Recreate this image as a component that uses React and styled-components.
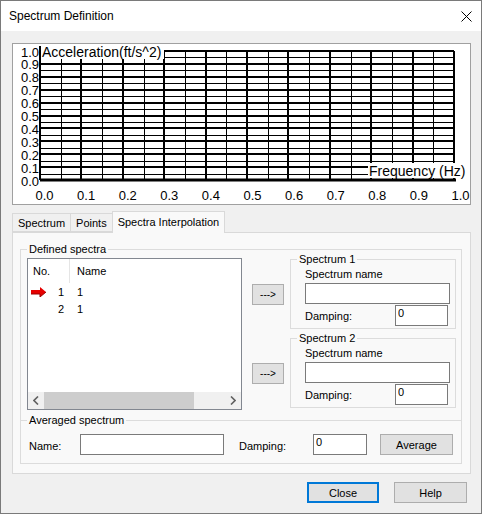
import React from 'react';
import styled, { createGlobalStyle } from 'styled-components';

const GlobalStyle = createGlobalStyle`
  body {
    margin: 0;
    background: #ffffff;
    font-family: "Liberation Sans", Arial, sans-serif;
    font-size: 11px;
    color: #000;
  }
`;

const Window = styled('div')`
  width: 482px;
  height: 514px;
  box-sizing: border-box;
  border: 1px solid #7a7a7a;
  background: #f0f0f0;
  display: flex;
  flex-direction: column;
`;

const TitleBar = styled('div')`
  height: 30px;
  background: #ffffff;
  display: flex;
  align-items: center;
  justify-content: space-between;
  padding: 0 9px 0 8px;
  font-size: 12px;
`;

const Body = styled('div')`
  display: flex;
  flex-direction: column;
  padding: 12px 10px 0 11px;
`;

const ChartPanel = styled('div')`
  width: 459px;
  height: 162px;
  box-sizing: border-box;
  border: 1px solid #a0a0a0;
  background: #ffffff;
  svg { display: block; }
`;

const TabStrip = styled('div')`
  display: flex;
  align-items: flex-end;
  height: 21px;
  margin-top: 6px;
`;

const Tab = styled('div')`
  position: relative;
  box-sizing: border-box;
  height: ${p => (p.$active ? '22px' : '19px')};
  margin-bottom: ${p => (p.$active ? '-1px' : '0')};
  margin-left: ${p => (p.$first ? '0' : '-1px')};
  z-index: ${p => (p.$active ? 1 : 0)};
  padding: ${p => (p.$active ? '0 5px 2px' : '0 5px')};
  display: flex;
  align-items: center;
  border: 1px solid #d9d9d9;
  border-bottom: ${p => (p.$active ? 'none' : '1px solid #d9d9d9')};
  background: ${p => (p.$active ? '#f9f9f9' : '#f0f0f0')};
`;

const Pane = styled('div')`
  width: 459px;
  height: 242px;
  box-sizing: border-box;
  border: 1px solid #d9d9d9;
  background: #f9f9f9;
  padding: 10px 8px 0 7px;
`;

const GroupBox = styled('fieldset')`
  margin: 0;
  min-width: 0;
  box-sizing: border-box;
  border: 1px solid #dcdcdc;
  padding: ${p => p.$pad || '0'};
  legend {
    padding: 0 2px;
    margin-left: ${p => p.$legendOffset || '6px'};
    line-height: 12px;
  }
`;

const LineBox = styled('fieldset')`
  margin: 4px 0 0;
  min-width: 0;
  border: none;
  border-top: 1px solid #dcdcdc;
  padding: 0 0 8px 8px;
  legend {
    padding: 0 2px;
    margin-left: -2px;
    line-height: 12px;
  }
`;

const TopRow = styled('div')`
  display: flex;
  align-items: flex-start;
  margin: 3px 0 0 6px;
`;

const ListView = styled('div')`
  width: 215px;
  height: 152px;
  box-sizing: border-box;
  border: 1px solid #828790;
  background: #ffffff;
  display: flex;
  flex-direction: column;
`;

const ListHeader = styled('div')`
  display: flex;
  height: 24px;
  align-items: stretch;
`;

const HeadCell = styled('div')`
  width: ${p => p.$w || 'auto'};
  flex: ${p => (p.$w ? 'none' : '1')};
  display: flex;
  align-items: center;
  padding-left: ${p => p.$pl || '5px'};
  box-sizing: border-box;
  border-right: ${p => (p.$divider ? '1px solid #e5e5e5' : 'none')};
`;

const ListRow = styled('div')`
  display: flex;
  height: 17px;
  align-items: center;
`;

const NoCell = styled('div')`
  width: 42px;
  box-sizing: border-box;
  display: flex;
  align-items: center;
  padding: 0 6px 0 3px;
  span { margin-left: auto; }
`;

const NameCell = styled('div')`
  padding-left: 7px;
`;

const Spacer = styled('div')`
  flex: 1;
`;

const HScroll = styled('div')`
  height: 17px;
  background: #f0f0f0;
  display: flex;
  align-items: center;
`;

const ScrollArrow = styled('div')`
  width: 16px;
  height: 17px;
  display: flex;
  align-items: center;
  justify-content: center;
`;

const Thumb = styled('div')`
  width: 150px;
  height: 17px;
  background: #cdcdcd;
`;

const ArrowColumn = styled('div')`
  display: flex;
  flex-direction: column;
  margin-left: 10px;
  padding-top: 26px;
  gap: 58px;
`;

const Button = styled('button')`
  width: ${p => p.$w};
  height: 21px;
  box-sizing: border-box;
  margin: 0;
  padding: 0;
  font-family: "Liberation Sans", Arial, sans-serif;
  font-size: ${p => p.$fs || '11px'};
  color: #000;
  background: #e1e1e1;
  border: ${p => (p.$default ? '2px solid #0078d7' : '1px solid #adadad')};
`;

const SpecColumn = styled('div')`
  display: flex;
  flex-direction: column;
  gap: 3px;
  margin: -5px 0 0 6px;
  width: 166px;
`;

const FieldLabel = styled('div')`
  line-height: 13px;
  margin-top: ${p => p.$mt || '0'};
`;

const TextBox = styled('input')`
  width: ${p => p.$w};
  height: 21px;
  box-sizing: border-box;
  margin: ${p => p.$m || '0'};
  border: 1px solid #7a7a7a;
  background: #ffffff;
  font-family: "Liberation Sans", Arial, sans-serif;
  font-size: 11px;
  color: #000;
  padding: 0 2px 6px;
  outline: none;
`;

const DampRow = styled('div')`
  display: flex;
  align-items: center;
  justify-content: space-between;
  margin-top: 1px;
  padding-right: 1px;
`;

const AvgRow = styled('div')`
  display: flex;
  align-items: center;
  margin-top: 8px;
`;

const InlineLabel = styled('div')`
  width: ${p => p.$w};
  margin-left: ${p => p.$ml || '0'};
  padding-top: 2px;
`;

const Footer = styled('div')`
  display: flex;
  justify-content: flex-end;
  gap: 15px;
  margin: 8px 4px 0 0;
`;

const plot = { x0: 27, x1: 441, y0: 7, y1: 136 };

function Chart() {
  const lines = [];
  for (let i = 0; i <= 20; i++) {
    const bold = i % 2 === 0;
    const x = Math.round(plot.x0 + (i * (plot.x1 - plot.x0)) / 20) + (bold ? 0 : 0.5);
    lines.push(<line key={'v' + i} x1={x} y1={plot.y0} x2={x} y2={plot.y1} stroke="#000" strokeWidth={bold ? 2 : 1} />);
    const y = Math.round(plot.y1 - (i * (plot.y1 - plot.y0)) / 20) + (bold ? 0 : 0.5);
    lines.push(<line key={'h' + i} x1={plot.x0} y1={y} x2={plot.x1} y2={y} stroke="#000" strokeWidth={bold ? 2 : 1} />);
  }
  const ticks = [];
  for (let i = 0; i <= 10; i++) {
    const v = (i / 10).toFixed(1);
    const y = plot.y1 - (i * (plot.y1 - plot.y0)) / 10;
    ticks.push(<text key={'y' + i} x={26} y={y + 5.5} textAnchor="end">{v}</text>);
    ticks.push(<text key={'x' + i} x={31.5 + i * 41.6} y={156} textAnchor="middle">{v}</text>);
  }
  return (
    <svg width="457" height="160" viewBox="0 0 457 160" fontFamily="Liberation Sans, Arial, sans-serif" fontSize="13">
      {lines}
      <line x1={plot.x0} y1={2} x2={plot.x0} y2={plot.y1} stroke="#000" strokeWidth="2" />
      <line x1={plot.x0} y1={plot.y1} x2={443} y2={plot.y1} stroke="#000" strokeWidth="3" />
      <rect x="28" y="0" width="123" height="15" fill="#fff" />
      <text x="29" y="13" fontSize="14">Acceleration(ft/s^2)</text>
      <rect x="355" y="119" width="101" height="15" fill="#fff" />
      <text x="356" y="132" fontSize="14">Frequency (Hz)</text>
      {ticks}
    </svg>
  );
}

function RowArrow() {
  return (
    <svg width="16" height="10" viewBox="0 0 16 10">
      <polygon points="0,3 9,3 9,0 15,5 9,10 9,7 0,7" fill="#e60000" />
      <polyline points="0,7 9,7 9,10 15,5" fill="none" stroke="#9a0000" strokeWidth="1" />
    </svg>
  );
}

function Chevron({ dir }) {
  return (
    <svg width="6" height="9" viewBox="0 0 6 9">
      <polyline points={dir === 'left' ? '5,0.5 1,4.5 5,8.5' : '1,0.5 5,4.5 1,8.5'} fill="none" stroke="#606060" strokeWidth="1.6" />
    </svg>
  );
}

function SpectrumGroup({ title }) {
  return (
    <GroupBox $pad="0 6px 2px 14px" $legendOffset="-8px">
      <legend>{title}</legend>
      <FieldLabel $mt="3px">Spectrum name</FieldLabel>
      <TextBox $w="145px" $m="2px 0 0" />
      <DampRow>
        <span>Damping:</span>
        <TextBox $w="53px" defaultValue="0" />
      </DampRow>
    </GroupBox>
  );
}

export default function App() {
  return (
    <Window>
      <GlobalStyle />
      <TitleBar>
        <span>Spectrum Definition</span>
        <svg width="11" height="11" viewBox="0 0 11 11">
          <path d="M0.5 0.5 L10.5 10.5 M10.5 0.5 L0.5 10.5" stroke="#000" strokeWidth="1" />
        </svg>
      </TitleBar>
      <Body>
        <ChartPanel>
          <Chart />
        </ChartPanel>
        <TabStrip>
          <Tab $first>Spectrum</Tab>
          <Tab>Points</Tab>
          <Tab $active>Spectra Interpolation</Tab>
        </TabStrip>
        <Pane>
          <GroupBox style={{ height: 221 }}>
            <legend>Defined spectra</legend>
            <TopRow>
              <ListView>
                <ListHeader>
                  <HeadCell $w="42px" $divider>No.</HeadCell>
                  <HeadCell $pl="7px">Name</HeadCell>
                </ListHeader>
                <ListRow>
                  <NoCell><RowArrow /><span>1</span></NoCell>
                  <NameCell>1</NameCell>
                </ListRow>
                <ListRow>
                  <NoCell><span>2</span></NoCell>
                  <NameCell>1</NameCell>
                </ListRow>
                <Spacer />
                <HScroll>
                  <ScrollArrow><Chevron dir="left" /></ScrollArrow>
                  <Thumb />
                  <Spacer />
                  <ScrollArrow><Chevron dir="right" /></ScrollArrow>
                </HScroll>
              </ListView>
              <ArrowColumn>
                <Button $w="32px" $fs="10px">---&gt;</Button>
                <Button $w="32px" $fs="10px">---&gt;</Button>
              </ArrowColumn>
              <SpecColumn>
                <SpectrumGroup title="Spectrum 1" />
                <SpectrumGroup title="Spectrum 2" />
              </SpecColumn>
            </TopRow>
            <LineBox>
              <legend>Averaged spectrum</legend>
              <AvgRow>
                <InlineLabel $w="51px">Name:</InlineLabel>
                <TextBox $w="144px" />
                <InlineLabel $w="74px" $ml="15px">Damping:</InlineLabel>
                <TextBox $w="54px" defaultValue="0" />
                <Button $w="73px" style={{ marginLeft: 13 }}>Average</Button>
              </AvgRow>
            </LineBox>
          </GroupBox>
        </Pane>
        <Footer>
          <Button $w="72px" $default>Close</Button>
          <Button $w="73px">Help</Button>
        </Footer>
      </Body>
    </Window>
  );
}
